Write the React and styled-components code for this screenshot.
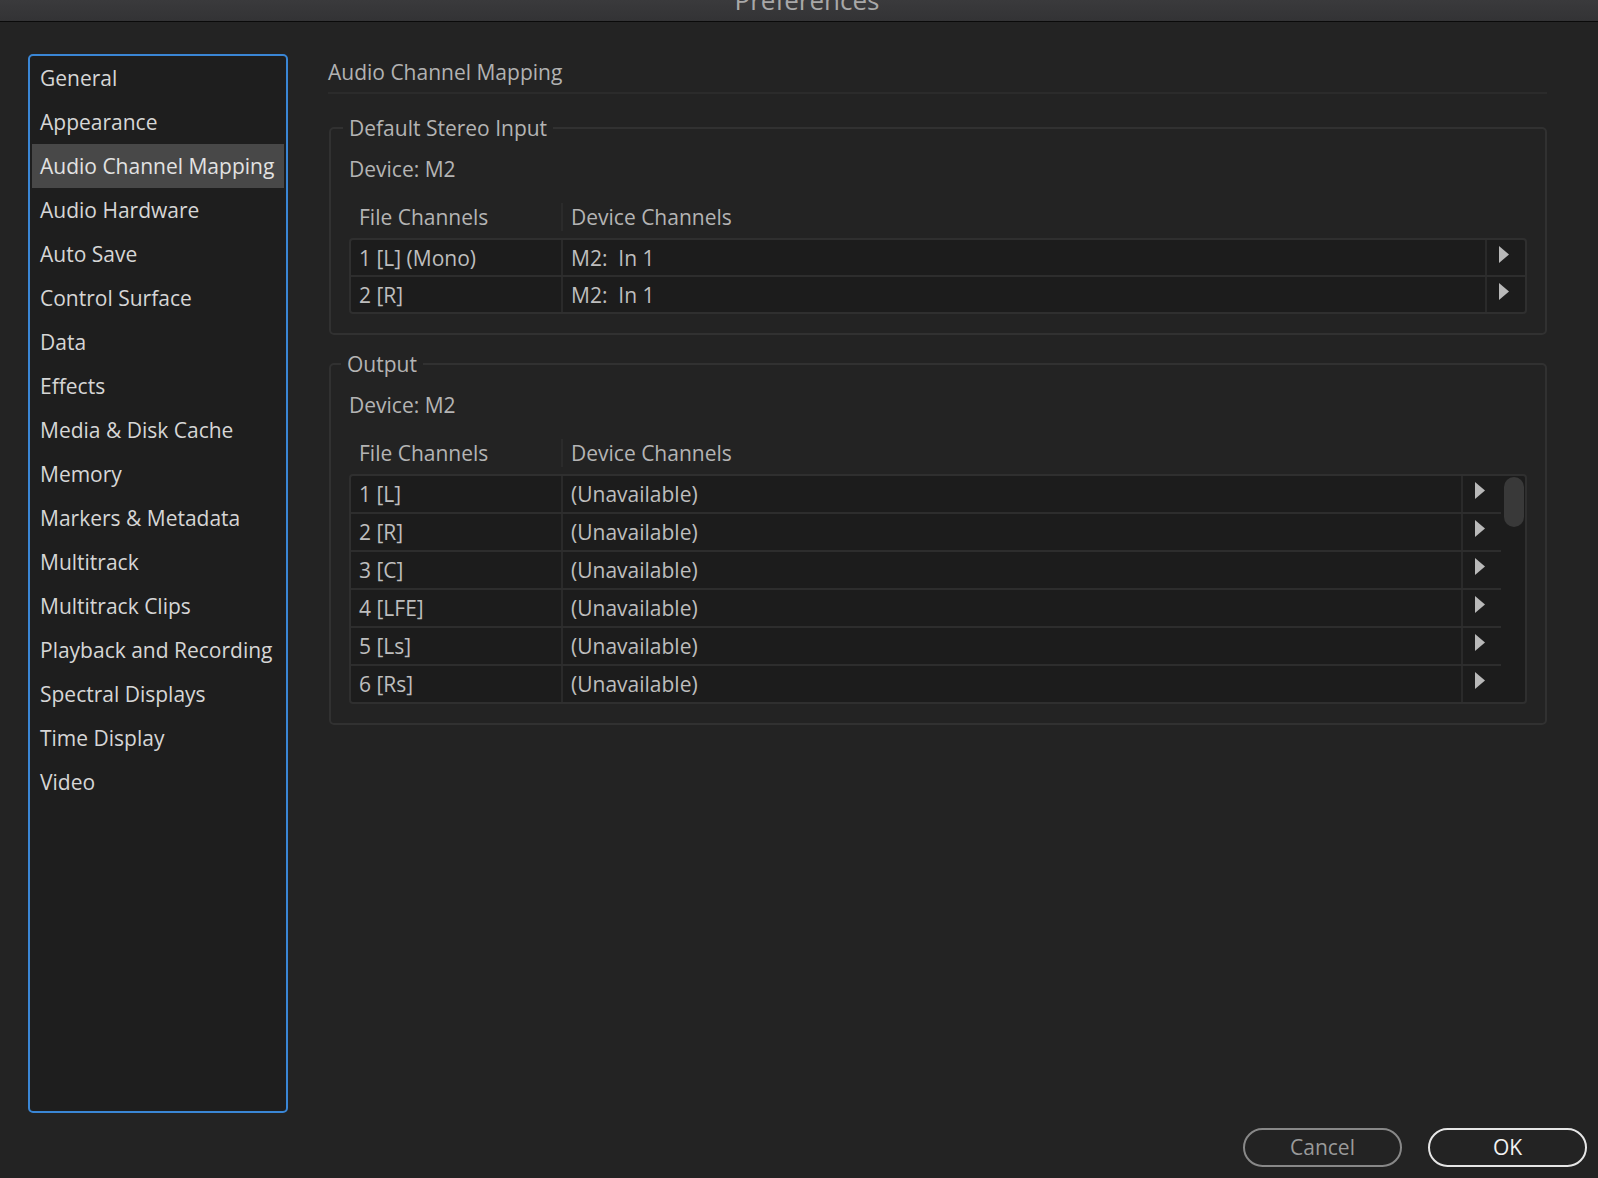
import styled, { createGlobalStyle } from "styled-components";

const sections = [
  "General",
  "Appearance",
  "Audio Channel Mapping",
  "Audio Hardware",
  "Auto Save",
  "Control Surface",
  "Data",
  "Effects",
  "Media & Disk Cache",
  "Memory",
  "Markers & Metadata",
  "Multitrack",
  "Multitrack Clips",
  "Playback and Recording",
  "Spectral Displays",
  "Time Display",
  "Video",
];

const stereoRows = [
  { file: "1 [L] (Mono)", device: "M2:\u00a0 In 1" },
  { file: "2 [R]", device: "M2:\u00a0 In 1" },
];

const outputRows = ["1 [L]", "2 [R]", "3 [C]", "4 [LFE]", "5 [Ls]", "6 [Rs]"].map(
  (file) => ({ file, device: "(Unavailable)" })
);

function Arrow() {
  return (
    <svg width="10" height="17" viewBox="0 0 10 17">
      <polygon points="0,0 10,8.5 0,17" fill="#b9b9b9" />
    </svg>
  );
}

function ChannelTable({ rows, rowHeight, scroll }) {
  return (
    <>
      <HeaderRow>
        <HeaderCell>File Channels</HeaderCell>
        <HeaderCell $divider>Device Channels</HeaderCell>
      </HeaderRow>
      <Table>
        <Rows>
          {rows.map((row) => (
            <Row key={row.file} $h={rowHeight}>
              <Cell>{row.file}</Cell>
              <Cell $divider>{row.device}</Cell>
              <ArrowCell>
                <Arrow />
              </ArrowCell>
            </Row>
          ))}
        </Rows>
        {scroll && (
          <ScrollGutter>
            <Thumb />
          </ScrollGutter>
        )}
      </Table>
    </>
  );
}

export default function App() {
  return (
    <>
      <GlobalStyle />
      <Window>
        <TitleBar>
          <Title>Preferences</Title>
        </TitleBar>
        <Body>
          <Sidebar>
            {sections.map((name) => (
              <NavItem key={name} $active={name === "Audio Channel Mapping"}>
                {name}
              </NavItem>
            ))}
          </Sidebar>
          <Content>
            <Heading>Audio Channel Mapping</Heading>
            <Group>
              <Legend>Default Stereo Input</Legend>
              <Device>Device: M2</Device>
              <ChannelTable rows={stereoRows} rowHeight={37} />
            </Group>
            <Group $gap={15}>
              <Legend $shift={8}>Output</Legend>
              <Device>Device: M2</Device>
              <ChannelTable rows={outputRows} rowHeight={38} scroll />
            </Group>
          </Content>
        </Body>
        <Footer>
          <Button>Cancel</Button>
          <Button $primary>OK</Button>
        </Footer>
      </Window>
    </>
  );
}

const GlobalStyle = createGlobalStyle`
  html, body {
    margin: 0;
    padding: 0;
    background: #232323;
  }
  body {
    font-family: "Open Sans", "Noto Sans", sans-serif;
  }
  * {
    box-sizing: border-box;
  }
`;

const Window = styled.div`
  width: 1598px;
  height: 1178px;
  display: flex;
  flex-direction: column;
  background: #232323;
  overflow: hidden;
`;

const TitleBar = styled.div`
  height: 22px;
  flex-shrink: 0;
  display: flex;
  justify-content: center;
  align-items: flex-end;
  padding-left: 16px;
  overflow: hidden;
  background: linear-gradient(#3a3a3c, #333335);
  border-bottom: 1px solid #0a0a0a;
`;

const Title = styled.span`
  font-size: 26px;
  line-height: 26px;
  margin-bottom: 8px;
  color: #a8a8a8;
  white-space: nowrap;
`;

const Body = styled.div`
  flex: 1;
  display: flex;
  padding: 32px 51px 0 28px;
  min-height: 0;
`;

const Sidebar = styled.nav`
  width: 260px;
  flex-shrink: 0;
  display: flex;
  flex-direction: column;
  padding: 0 2px;
  background: #1e1e1e;
  border: 2px solid #3a86d5;
  border-radius: 5px;
`;

const NavItem = styled.div`
  height: 44px;
  flex-shrink: 0;
  display: flex;
  align-items: center;
  padding-left: 8px;
  font-size: 21px;
  white-space: nowrap;
  color: ${(p) => (p.$active ? "#e2e2e2" : "#d6d6d6")};
  background: ${(p) => (p.$active ? "#484848" : "transparent")};
`;

const Content = styled.main`
  flex: 1;
  display: flex;
  flex-direction: column;
  margin-left: 40px;
  min-width: 0;
`;

const Heading = styled.div`
  font-size: 21px;
  line-height: 28px;
  padding: 4px 0 6px;
  color: #b2b2b2;
  border-bottom: 2px solid #2b2b2b;
`;

const Group = styled.fieldset`
  margin: ${(p) => p.$gap ?? 20}px 0 0 1px;
  padding: 0 18px 19px;
  min-width: 0;
  border: 2px solid #313131;
  border-radius: 5px;
`;

const Legend = styled.legend`
  margin-left: -${(p) => p.$shift ?? 6}px;
  padding: 0 6px;
  font-size: 21px;
  line-height: 28px;
  color: #b4b4b4;
`;

const Device = styled.div`
  margin-top: 13px;
  font-size: 21px;
  line-height: 28px;
  color: #b4b4b4;
`;

const HeaderRow = styled.div`
  display: grid;
  grid-template-columns: 212px 1fr;
  margin-top: 20px;
  height: 28px;
`;

const HeaderCell = styled.div`
  display: flex;
  align-items: center;
  padding-left: ${(p) => (p.$divider ? 8 : 10)}px;
  font-size: 21px;
  color: #b4b4b4;
  border-left: ${(p) => (p.$divider ? "2px solid #2b2b2b" : "none")};
`;

const Table = styled.div`
  display: flex;
  margin-top: 7px;
  background: #1c1c1c;
  border: 2px solid #2f2f2f;
  border-radius: 4px;
`;

const Rows = styled.div`
  flex: 1;
  display: flex;
  flex-direction: column;
`;

const Row = styled.div`
  display: grid;
  grid-template-columns: 210px 1fr 40px;
  height: ${(p) => p.$h}px;
  border-bottom: 2px solid #2d2d2d;

  &:last-child {
    height: ${(p) => p.$h - 2}px;
    border-bottom: none;
  }
`;

const Cell = styled.div`
  display: flex;
  align-items: center;
  padding-left: 8px;
  font-size: 21px;
  color: #bebebe;
  white-space: nowrap;
  border-left: ${(p) => (p.$divider ? "2px solid #2a2a2a" : "none")};
`;

const ArrowCell = styled.div`
  display: flex;
  align-items: center;
  justify-content: center;
  border-left: 2px solid #2a2a2a;

  svg {
    margin: 0 4px 7px 0;
  }
`;

const ScrollGutter = styled.div`
  width: 24px;
  padding: 1px 1px 0 3px;
`;

const Thumb = styled.div`
  width: 20px;
  height: 50px;
  border-radius: 10px;
  background: #393939;
`;

const Footer = styled.div`
  height: 65px;
  flex-shrink: 0;
  display: flex;
  justify-content: flex-end;
  align-items: flex-start;
  gap: 26px;
  padding: 15px 11px 0 0;
`;

const Button = styled.button`
  width: 159px;
  height: 39px;
  border-radius: 20px;
  background: transparent;
  font-family: "Open Sans", "Noto Sans", sans-serif;
  font-size: 21px;
  line-height: 1;
  border: 2px solid ${(p) => (p.$primary ? "#e6e6e6" : "#888888")};
  color: ${(p) => (p.$primary ? "#f2f2f2" : "#9a9a9a")};
  cursor: pointer;
`;
